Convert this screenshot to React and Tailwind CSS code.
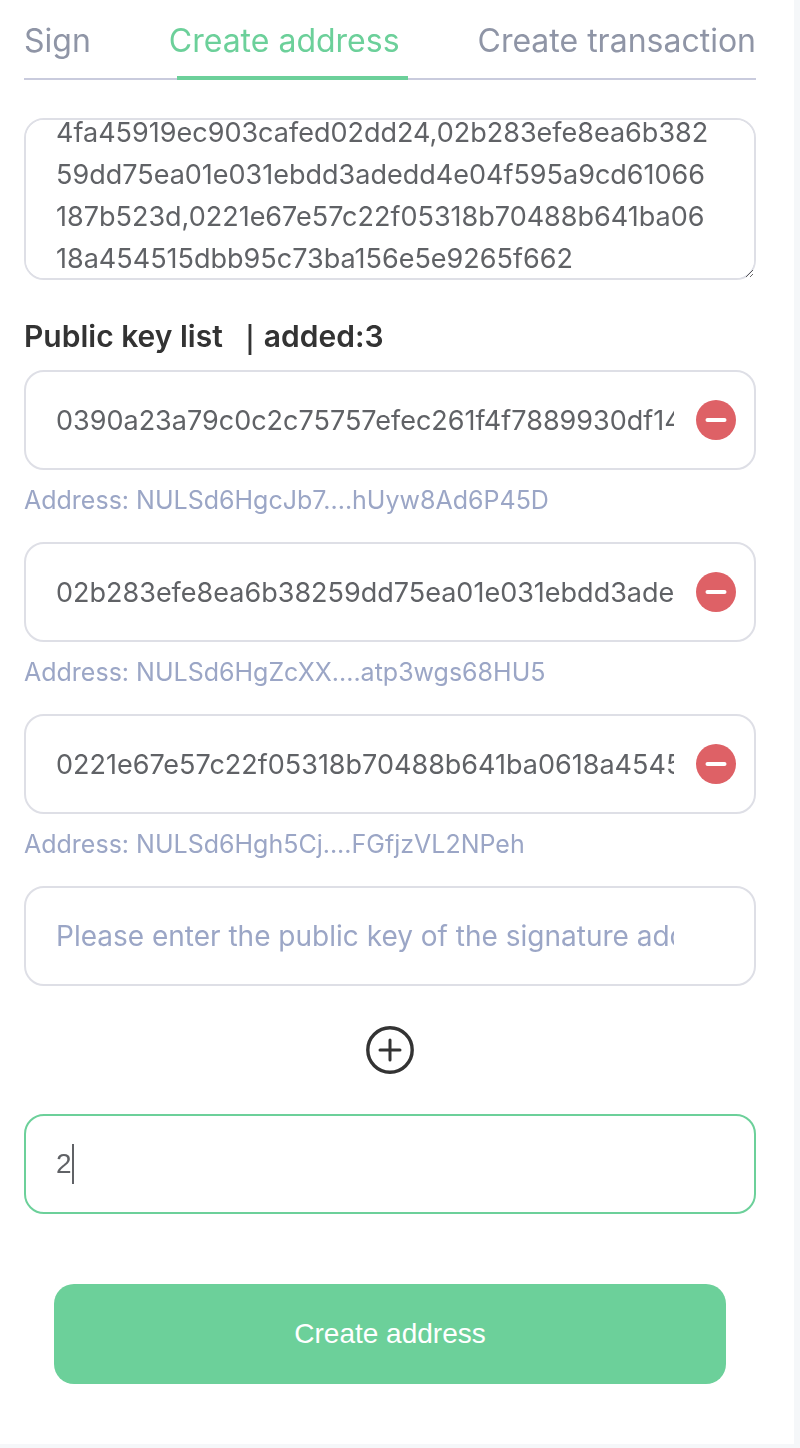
import React, { useEffect, useRef } from "react";

const KEYS = [
  { key: "0390a23a79c0c2c75757efec261f4f7889930df1434fa45919ec903cafed02dd24", address: "NULSd6HgcJb7....hUyw8Ad6P45D" },
  { key: "02b283efe8ea6b38259dd75ea01e031ebdd3adedd4e04f595a9cd61066187b523d", address: "NULSd6HgZcXX....atp3wgs68HU5" },
  { key: "0221e67e57c22f05318b70488b641ba0618a454515dbb95c73ba156e5e9265f662", address: "NULSd6Hgh5Cj....FGfjzVL2NPeh" },
];

const LINE_LENGTHS = [42, 42, 41, 42, 33];

function splitLines(text) {
  let start = 0;
  return LINE_LENGTHS.map((length) => {
    const line = text.slice(start, start + length);
    start += length;
    return line;
  }).join("\n");
}

function Field({ children }) {
  return (
    <div className="flex h-[100px] items-center rounded-[20px] border-2 border-[#dedfe6] bg-white pr-[18px] pl-[30px]">
      {children}
    </div>
  );
}

function KeyRow({ item, index }) {
  return (
    <li>
      <Field>
        <input
          type="text"
          aria-label={`Public key ${index + 1}`}
          defaultValue={item.key}
          className="h-full min-w-0 flex-1 bg-transparent text-[27px] outline-none"
        />
        <button type="button" aria-label={`Remove public key ${index + 1}`} className="ml-[22px] shrink-0">
          <svg viewBox="0 0 40 40" className="block size-10" aria-hidden="true">
            <circle cx="20" cy="20" r="20" fill="#de6166" />
            <path d="M11.5 20H28.5" stroke="#fff" strokeWidth="4" strokeLinecap="round" />
          </svg>
        </button>
      </Field>
      <p className="h-[72px] pt-[10px] text-[25px] leading-10 text-[#9ba6c6]">Address: {item.address}</p>
    </li>
  );
}

export default function App() {
  const bulk = useRef(null);
  useEffect(() => {
    bulk.current.scrollTop = 60;
  }, []);

  return (
    <div className="bg-[#f5f7f9] pr-1.5 pb-1 font-['Inter',sans-serif] text-[28px] text-[#606266]">
      <main className="bg-white pr-[38px] pb-[60px] pl-6">
        <nav className="flex h-20 justify-between border-b-2 border-[#c9cbdd] text-[32px] leading-[82px] text-[#8f95a6]">
          <a href="#sign">Sign</a>
          <a
            href="#address"
            aria-current="page"
            className="relative h-20 text-[#6cd09a] after:absolute after:bottom-0 after:left-2 after:h-1 after:w-full after:bg-[#6cd09a]"
          >
            Create address
          </a>
          <a href="#transaction">Create transaction</a>
        </nav>

        <form onSubmit={(event) => event.preventDefault()}>
          <textarea
            ref={bulk}
            aria-label="Public keys"
            defaultValue={splitLines(KEYS.map((item) => item.key).join(","))}
            className="mt-[38px] block h-[162px] w-full resize-y rounded-[20px] border-2 border-[#dedfe6] bg-white px-[30px] py-[10px] text-[27px] leading-[42px] whitespace-pre outline-none [scrollbar-width:none]"
          />

          <h2 className="mt-9 mb-[14px] h-10 text-[30px] leading-10 font-semibold text-[#333333]">
            Public key list<span className="ml-3">｜added:{KEYS.length}</span>
          </h2>

          <ul>
            {KEYS.map((item, index) => (
              <KeyRow key={item.key} item={item} index={index} />
            ))}
          </ul>
          <Field>
            <input
              type="text"
              aria-label="New public key"
              placeholder="Please enter the public key of the signature address"
              className="mr-[62px] h-full min-w-0 flex-1 bg-transparent outline-none placeholder:text-[#9ba6c6]"
            />
          </Field>

          <button type="button" aria-label="Add public key" className="mx-auto my-10 block">
            <svg viewBox="0 0 48 48" className="block size-12" fill="none" stroke="#333333" strokeLinecap="round" aria-hidden="true">
              <circle cx="24" cy="24" r="22.2" strokeWidth="3.4" />
              <path d="M14 24H34M24 14V34" strokeWidth="3" />
            </svg>
          </button>

          <div className="relative">
            <input
              type="text"
              aria-label="Minimum signatures"
              defaultValue="2"
              className="block h-[100px] w-full rounded-[20px] border-2 border-[#6cd09a] bg-white px-[30px] font-['Liberation_Sans',sans-serif] caret-transparent outline-none"
            />
            <span className="absolute top-[30px] left-12 h-10 w-0.5 bg-[#606266]" />
          </div>

          <div className="mt-[70px] px-[30px]">
            <button
              type="submit"
              className="h-[100px] w-full rounded-[20px] bg-[#6cd09a] font-['Liberation_Sans',sans-serif] text-white"
            >
              Create address
            </button>
          </div>
        </form>
      </main>
    </div>
  );
}
